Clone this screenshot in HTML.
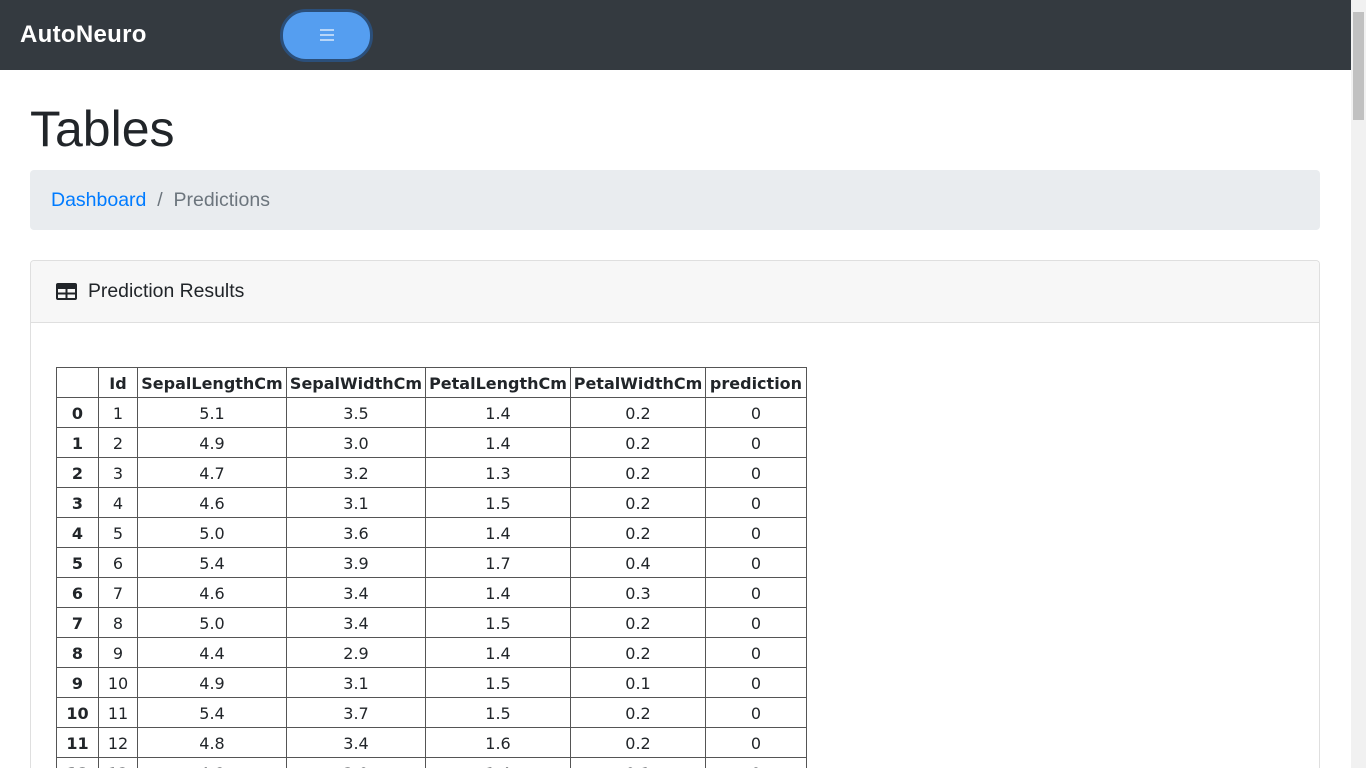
<!DOCTYPE html><html style="height:768px;overflow:hidden"><head><style>
body{margin:0;width:1366px;height:768px;overflow:hidden;font-family:"Liberation Sans",sans-serif;background:#fff;position:relative}
.nav{position:absolute;left:0;top:0;width:1351px;height:70px;background:#343a40}
.brand{position:absolute;left:20px;top:21px;color:#fff;font-size:24px;font-weight:bold;letter-spacing:0.3px}
.btn{position:absolute;left:280px;top:9px;width:87px;height:47px;border-radius:26px;background:#559ef0;border:3px solid #2b4f7a}
.btn i{position:absolute;left:37px;height:2px;width:14px;background:#b8d6f8}
.sb{position:absolute;right:0;top:0;width:15px;height:768px;background:#f1f1f1}
.sb div{position:absolute;left:2px;top:12px;width:11px;height:108px;background:#c1c1c1}
h1{position:absolute;left:30px;top:103px;margin:0;font-weight:400;font-size:50px;color:#212529;line-height:52px}
.bc{position:absolute;left:30px;top:170px;width:1290px;height:60px;background:#e9ecef;border-radius:4px;font-size:19.5px;line-height:60px;color:#6c757d}
.bc a{color:#007bff;margin-left:21px}
.card{position:absolute;left:30px;top:260px;width:1288px;height:507px;border:1px solid #dfdfdf;border-bottom:none;border-radius:4px 4px 0 0;overflow:hidden}
.ch{height:61px;background:#f7f7f7;border-bottom:1px solid #dfdfdf;font-size:19.4px;line-height:61px;color:#212529}
table{position:absolute;left:25px;top:106px;border-collapse:collapse;font-family:"DejaVu Sans",sans-serif;font-size:16px;color:#212529}
td,th{border:1px solid #555;height:29px;padding:1px 0 0;text-align:center;box-sizing:border-box}
tr{height:30px}
th{font-weight:bold}
</style></head><body>
<div class="nav"><div class="brand">AutoNeuro</div><div class="btn"><i style="top:17px"></i><i style="top:22px"></i><i style="top:27px"></i></div></div>
<div class="sb"><div></div></div>
<h1>Tables</h1>
<div class="bc"><a>Dashboard</a> &nbsp;/&nbsp; Predictions</div>
<div class="card"><div class="ch"><svg width="21" height="17" style="position:absolute;left:25px;top:22px" viewBox="0 0 21 17"><rect x="0" y="0" width="21" height="17" rx="2" fill="#212529"/><rect x="2" y="6" width="7.5" height="3.5" fill="#f7f7f7"/><rect x="11.5" y="6" width="7.5" height="3.5" fill="#f7f7f7"/><rect x="2" y="11.5" width="7.5" height="3.5" fill="#f7f7f7"/><rect x="11.5" y="11.5" width="7.5" height="3.5" fill="#f7f7f7"/></svg><span style="margin-left:57px">Prediction Results</span></div>
<table>
<tr><th style="width:42px"></th><th style="width:39px">Id</th><th style="width:149px">SepalLengthCm</th><th style="width:139px">SepalWidthCm</th><th style="width:145px">PetalLengthCm</th><th style="width:135px">PetalWidthCm</th><th style="width:101px">prediction</th></tr>
<tr><th>0</th><td>1</td><td>5.1</td><td>3.5</td><td>1.4</td><td>0.2</td><td>0</td></tr>
<tr><th>1</th><td>2</td><td>4.9</td><td>3.0</td><td>1.4</td><td>0.2</td><td>0</td></tr>
<tr><th>2</th><td>3</td><td>4.7</td><td>3.2</td><td>1.3</td><td>0.2</td><td>0</td></tr>
<tr><th>3</th><td>4</td><td>4.6</td><td>3.1</td><td>1.5</td><td>0.2</td><td>0</td></tr>
<tr><th>4</th><td>5</td><td>5.0</td><td>3.6</td><td>1.4</td><td>0.2</td><td>0</td></tr>
<tr><th>5</th><td>6</td><td>5.4</td><td>3.9</td><td>1.7</td><td>0.4</td><td>0</td></tr>
<tr><th>6</th><td>7</td><td>4.6</td><td>3.4</td><td>1.4</td><td>0.3</td><td>0</td></tr>
<tr><th>7</th><td>8</td><td>5.0</td><td>3.4</td><td>1.5</td><td>0.2</td><td>0</td></tr>
<tr><th>8</th><td>9</td><td>4.4</td><td>2.9</td><td>1.4</td><td>0.2</td><td>0</td></tr>
<tr><th>9</th><td>10</td><td>4.9</td><td>3.1</td><td>1.5</td><td>0.1</td><td>0</td></tr>
<tr><th>10</th><td>11</td><td>5.4</td><td>3.7</td><td>1.5</td><td>0.2</td><td>0</td></tr>
<tr><th>11</th><td>12</td><td>4.8</td><td>3.4</td><td>1.6</td><td>0.2</td><td>0</td></tr>
<tr><th>12</th><td>13</td><td>4.8</td><td>3.0</td><td>1.4</td><td>0.1</td><td>0</td></tr>
</table></div>
</body></html>
